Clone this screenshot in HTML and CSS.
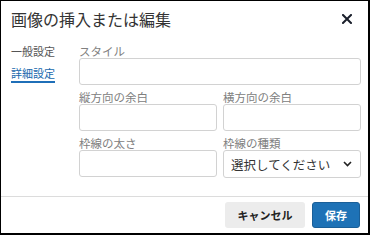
FILE: index.html
```html
<!DOCTYPE html>
<html lang="ja">
<head>
<meta charset="utf-8">
<link rel="stylesheet" href="styles.css">
</head>
<body>
<div class="dialog">
  <div class="header">
    <div class="title">画像の挿入または編集</div>
    <button class="close" aria-label="閉じる">
      <svg width="10" height="10" viewBox="0 0 10 10"><path d="M1 1 L9 9 M9 1 L1 9" stroke="#1a1f2b" stroke-width="2" stroke-linecap="square" fill="none"/></svg>
    </button>
  </div>
  <div class="body">
    <div class="nav">
      <div class="tab">一般設定</div>
      <div class="tab active">詳細設定</div>
    </div>
    <div class="form">
      <div class="field full">
        <label class="label">スタイル</label>
        <input class="input" type="text">
      </div>
      <div class="field">
        <label class="label">縦方向の余白</label>
        <input class="input" type="text">
      </div>
      <div class="field">
        <label class="label">横方向の余白</label>
        <input class="input" type="text">
      </div>
      <div class="field">
        <label class="label">枠線の太さ</label>
        <input class="input" type="text">
      </div>
      <div class="field">
        <label class="label">枠線の種類</label>
        <div class="select-wrap">
          <select class="select"><option>選択してください</option></select>
          <svg class="chevron" width="9" height="6" viewBox="0 0 9 6"><path d="M1 1 L4.5 4.5 L8 1" stroke="#222" stroke-width="1.6" fill="none"/></svg>
        </div>
      </div>
    </div>
  </div>
  <div class="footer">
    <button class="btn cancel">キャンセル</button>
    <button class="btn save">保存</button>
  </div>
</div>
</body>
</html>
```

FILE: styles.css
```css
* { box-sizing: border-box; }
html, body { margin: 0; padding: 0; background: #fff; }
body {
  font-family: "Noto Sans CJK JP", "Noto Sans", sans-serif;
  color: #333;
}
.dialog {
  width: 370px;
  height: 235px;
  border-top: 1px solid #000;
  border-left: 1px solid #000;
  border-right: 2px solid #000;
  border-bottom: 2px solid #000;
  display: flex;
  flex-direction: column;
  background: #fff;
}
.header {
  height: 36px;
  display: flex;
  align-items: center;
  justify-content: space-between;
  padding: 0 16px 0 10px;
}
.title {
  font-size: 16px;
  line-height: 22px;
  color: #333;
}
.close {
  border: 0;
  background: none;
  padding: 0;
  width: 10px;
  height: 10px;
  display: flex;
}
.body {
  flex: 1;
  display: flex;
  padding: 7px 7px 0 10px;
}
.nav {
  width: 68px;
  display: flex;
  flex-direction: column;
  align-items: flex-start;
  gap: 8px;
}
.tab {
  font-size: 11px;
  line-height: 14px;
  color: #555;
}
.tab.active {
  color: #2068ad;
  padding-bottom: 1px;
  border-bottom: 2px solid #1f6fb8;
}
.form {
  flex: 1;
  display: grid;
  grid-template-columns: 1fr 1fr;
  column-gap: 6px;
  row-gap: 5px;
  align-content: start;
}
.field { display: flex; flex-direction: column; }
.field.full { grid-column: 1 / 3; }
.label {
  font-size: 11.5px;
  line-height: 14px;
  color: #808080;
}
.input {
  height: 27px;
  width: 100%;
  border: 1px solid #d2d2d2;
  border-radius: 3px;
  margin: 0;
  background: #fff;
}
.select-wrap { position: relative; }
.select {
  appearance: none;
  -webkit-appearance: none;
  width: 100%;
  height: 28px;
  border: 1px solid #d2d2d2;
  border-radius: 3px;
  background: #fff;
  font-family: "Noto Sans CJK JP", sans-serif;
  font-size: 12.5px;
  color: #333;
  padding: 0 0 0 7px;
  margin: 0;
}
.chevron {
  position: absolute;
  right: 9px;
  top: 11px;
}
.footer {
  border-top: 1px solid #dcdcdc;
  display: flex;
  justify-content: flex-end;
  gap: 7px;
  padding: 5px 8px 0 0;
  height: 37px;
}
.btn {
  height: 26px;
  border: 0;
  border-radius: 3px;
  font-family: "Noto Sans CJK JP", sans-serif;
  font-weight: 700;
  font-size: 11px;
  padding: 0;
}
.cancel {
  width: 80px;
  background: #ececec;
  color: #222;
}
.save {
  width: 48px;
  background: #1e72b6;
  color: #fff;
  border: 1px solid #1a5f98;
}
```
